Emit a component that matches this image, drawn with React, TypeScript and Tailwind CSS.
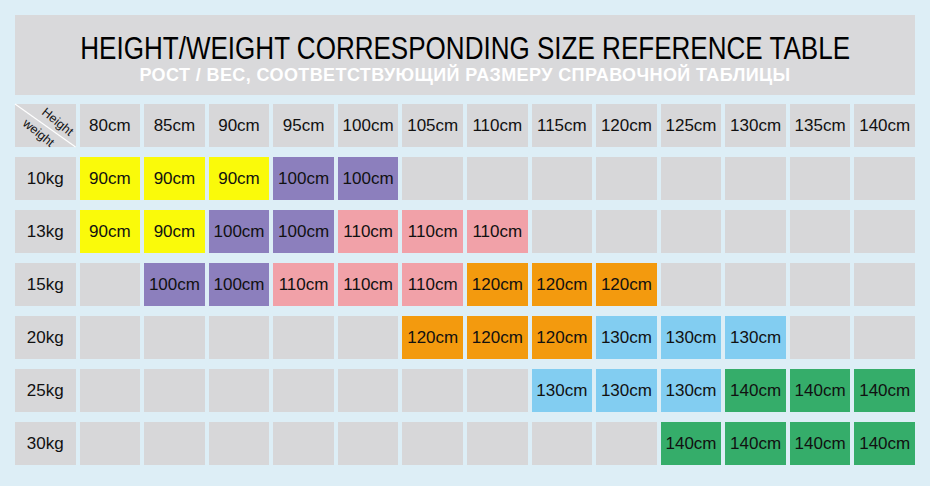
const heights = ['80cm', '85cm', '90cm', '95cm', '100cm', '105cm', '110cm', '115cm', '120cm', '125cm', '130cm', '135cm', '140cm'];

const tone: Record<string, string> = {
  Y: 'bg-[#fafa0a]',
  P: 'bg-[#8c7fbd]',
  K: 'bg-[#f1a1a8]',
  O: 'bg-[#f39a0e]',
  B: 'bg-[#82cdf1]',
  G: 'bg-[#35ad6a]',
};

const label: Record<string, string> = { Y: '90cm', P: '100cm', K: '110cm', O: '120cm', B: '130cm', G: '140cm' };

const rows = [
  { kg: '10kg', cells: 'YYYPP........' },
  { kg: '13kg', cells: 'YYPPKKK......' },
  { kg: '15kg', cells: '.PPKKKOOO....' },
  { kg: '20kg', cells: '.....OOOBBB..' },
  { kg: '25kg', cells: '.......BBBGGG' },
  { kg: '30kg', cells: '.........GGGG' },
];

function Corner() {
  return (
    <div className="bg-[#d7d7d9]">
      <svg width="100%" height="43" viewBox="0 0 60.5 43" preserveAspectRatio="none" className="block overflow-visible">
        <line x1="0" y1="0" x2="60.5" y2="43" stroke="#ffffff" strokeWidth="1.2" />
        <text x="40" y="21" transform="rotate(39 40 21)" textAnchor="middle" fontSize="12.5" fontFamily="Liberation Sans, Arial, sans-serif" fill="#111">Height</text>
        <text x="21" y="32" transform="rotate(39 21 32)" textAnchor="middle" fontSize="12.5" fontFamily="Liberation Sans, Arial, sans-serif" fill="#111">weight</text>
      </svg>
    </div>
  );
}

export default function App() {
  return (
    <div className="w-[930px] h-[500px] bg-white font-['Liberation_Sans',Arial,sans-serif] overflow-hidden">
      <div className="h-[486px] bg-[#ddeef6] px-[15px] pt-[15px]">
        <div className="h-[80px] bg-[#d9d9db] flex flex-col items-center">
          <div className="mt-[21px] text-[31px] leading-[26px] text-black scale-x-[0.84] whitespace-nowrap">HEIGHT/WEIGHT CORRESPONDING SIZE REFERENCE TABLE</div>
          <div className="mt-[4px] text-[18px] leading-[18px] tracking-[0.4px] text-white font-bold whitespace-nowrap">РОСТ / ВЕС, СООТВЕТСТВУЮЩИЙ РАЗМЕРУ СПРАВОЧНОЙ ТАБЛИЦЫ</div>
        </div>
        <div className="mt-[9px] grid grid-cols-14 gap-x-[4px] gap-y-[10px] auto-rows-[43px] text-[17px] text-[#111]">
          <Corner />
          {heights.map(h => (
            <div key={h} className="bg-[#d7d7d9] flex items-center justify-center">{h}</div>
          ))}
          {rows.map(r => (
            <>
              <div key={r.kg} className="bg-[#d7d7d9] flex items-center justify-center">{r.kg}</div>
              {r.cells.split('').map((c, i) => (
                <div key={r.kg + i} className={`flex items-center justify-center ${c === '.' ? 'bg-[#d7d7d9]' : tone[c]}`}>{c === '.' ? '' : label[c]}</div>
              ))}
            </>
          ))}
        </div>
      </div>
    </div>
  );
}
